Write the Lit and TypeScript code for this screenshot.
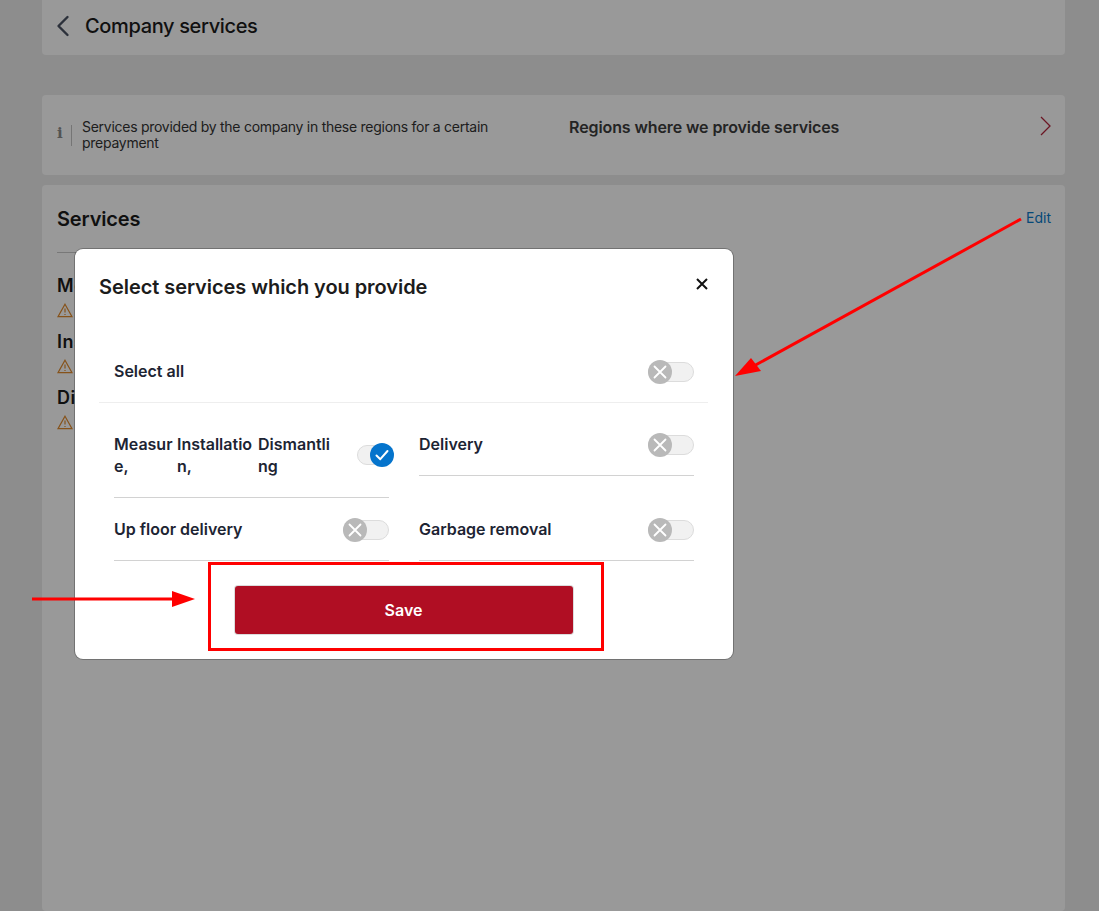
import { LitElement, html, css, svg } from "lit";
import { customElement, property } from "lit/decorators.js";

@customElement("app-switch")
export class AppSwitch extends LitElement {
  @property({ type: Boolean, reflect: true }) checked = false;

  static override styles = css`
    :host {
      display: block;
      position: relative;
      width: 46px;
      height: 24px;
      flex-shrink: 0;
    }
    :host([checked]) {
      width: 37px;
    }
    .track {
      position: absolute;
      left: 0;
      right: 0;
      top: 2px;
      height: 20px;
      box-sizing: border-box;
      background: #f1f1f1;
      border: 1px solid #dcdcdc;
      border-radius: 10px;
    }
    :host([checked]) .track {
      right: 2px;
    }
    .knob {
      position: absolute;
      left: 0;
      top: 0;
      width: 24px;
      height: 24px;
      border-radius: 50%;
      background: #b9b9b9;
      display: flex;
      align-items: center;
      justify-content: center;
    }
    :host([checked]) .knob {
      left: auto;
      right: 0;
      background: #0574cc;
    }
    svg {
      display: block;
      fill: none;
      stroke: #fff;
      stroke-width: 1.8;
      stroke-linecap: round;
      stroke-linejoin: round;
    }
    .tick {
      stroke-width: 2;
    }
  `;

  override render() {
    return html`
      <div class="track"></div>
      <div class="knob">
        ${this.checked
          ? html`<svg class="tick" width="16" height="16" viewBox="0 0 16 16"><path d="M2.5 8.5 6.3 12.2 13.5 4" /></svg>`
          : html`<svg width="14" height="14" viewBox="0 0 14 14"><path d="M1.5 1.5 12.5 12.5M12.5 1.5 1.5 12.5" /></svg>`}
      </div>
    `;
  }
}

const warning = html`<svg class="warn" width="16" height="15" viewBox="0 0 16 15" aria-hidden="true">
  <path d="M8 1.2 15 13.6H1L8 1.2Z" />
  <path d="M8 5.6V9.6M8 11V12" />
</svg>`;

@customElement("app-root")
export class AppRoot extends LitElement {
  static override styles = css`
    :host {
      display: block;
      height: 911px;
      overflow: hidden;
      position: relative;
      font-family: Inter, "Liberation Sans", sans-serif;
      color: #1b1b1b;
    }
    .page {
      height: 100%;
      box-sizing: border-box;
      background: #ececec;
      padding: 0 34px 0 42px;
      display: flex;
      flex-direction: column;
    }
    .card {
      background: #fff;
      border-radius: 4px;
    }
    .top {
      height: 55px;
      flex-shrink: 0;
      box-sizing: border-box;
      display: flex;
      align-items: center;
      gap: 15px;
      padding: 0 14px 3px 14px;
      margin-bottom: 40px;
      border-radius: 0 0 4px 4px;
      font-size: 20px;
      font-weight: 500;
      letter-spacing: -0.35px;
    }
    .top svg {
      fill: none;
      stroke: #4a5363;
      stroke-width: 2.4;
      stroke-linecap: round;
      stroke-linejoin: round;
    }
    .regions {
      height: 80px;
      flex-shrink: 0;
      box-sizing: border-box;
      margin-bottom: 10px;
      padding: 0 14px 0 15px;
      display: flex;
      align-items: flex-start;
    }
    .info-mark {
      margin-top: 30px;
      width: 15px;
      height: 21px;
      box-sizing: border-box;
      border-right: 1px solid #c4c4c4;
      font: bold 15px "DejaVu Serif", serif;
      color: #8a8a8a;
      line-height: 17px;
      flex-shrink: 0;
    }
    .note {
      margin: 24px 0 0 10px;
      width: 440px;
      font-size: 14px;
      line-height: 16px;
      letter-spacing: -0.27px;
      color: #333;
    }
    .regions-title {
      margin: 22px 0 0 47px;
      font-size: 16px;
      line-height: 20px;
      font-weight: 600;
      color: #3c3c3c;
      flex: 1;
      letter-spacing: -0.1px;
    }
    .chevron {
      margin-top: 21px;
      fill: none;
      stroke: #b3263d;
      stroke-width: 1.3;
    }
    .services {
      flex: 1;
      padding: 0 14px 0 15px;
    }
    .services-head {
      display: flex;
      justify-content: space-between;
      align-items: center;
      height: 67px;
      padding-top: 1px;
      box-sizing: border-box;
    }
    .services-head h2 {
      margin: 0;
      font-size: 20px;
      font-weight: 600;
      letter-spacing: -0.15px;
    }
    .edit {
      font-size: 14px;
      color: #0b7ac9;
      margin-top: -4px;
    }
    .service-list {
      width: 500px;
      border-top: 1px solid #c9c9c9;
      padding-top: 22px;
    }
    .service {
      height: 56px;
    }
    .service b {
      display: block;
      font-size: 18px;
      line-height: 22px;
      font-weight: 600;
      letter-spacing: 0.6px;
    }
    .warn {
      display: block;
      margin-top: 6px;
      fill: none;
      stroke: #e08a2d;
      stroke-width: 1.2;
    }
    .scrim {
      position: absolute;
      inset: 0;
      background: rgba(0, 0, 0, 0.4);
    }
    .modal {
      position: absolute;
      left: 75px;
      top: 249px;
      width: 658px;
      height: 410px;
      box-sizing: border-box;
      padding: 24px 25px 25px 24px;
      background: #fff;
      border-radius: 8px;
      box-shadow: 0 0 0 1px rgba(0, 0, 0, 0.25);
      display: flex;
      flex-direction: column;
    }
    .modal-head {
      display: flex;
      justify-content: space-between;
      align-items: flex-start;
      margin-bottom: 59px;
    }
    .modal-head h3 {
      margin: 0;
      font-size: 20px;
      line-height: 28px;
      font-weight: 600;
      letter-spacing: -0.06px;
      color: #1c1c1c;
    }
    .close {
      margin-top: 5px;
      fill: none;
      stroke: #111;
      stroke-width: 2;
    }
    .label {
      font-size: 16px;
      line-height: 22px;
      font-weight: 600;
      color: #1d2433;
    }
    app-switch {
      margin-bottom: -2px;
    }
    .select-all {
      display: flex;
      justify-content: space-between;
      align-items: flex-start;
      height: 43px;
      box-sizing: border-box;
      padding: 0 14px 18px 15px;
      border-bottom: 1px solid #eee;
      margin-bottom: 30px;
    }
    .grid {
      display: grid;
      grid-template-columns: 275px 275px;
      column-gap: 30px;
      row-gap: 20px;
      padding: 0 14px 0 15px;
      align-items: start;
    }
    .cell {
      display: flex;
      justify-content: space-between;
      align-items: flex-start;
      padding-bottom: 20px;
      border-bottom: 1px solid #d2d2d2;
    }
    .combined {
      justify-content: flex-start;
      align-items: center;
    }
    .combined .label:nth-child(1) {
      width: 63px;
    }
    .combined .label:nth-child(2) {
      width: 81px;
    }
    .combined .label:nth-child(3) {
      width: 99px;
    }
    .combined app-switch {
      margin: -2px -5px -2px 0;
    }
    .save {
      margin: 25px auto 0;
      width: 338px;
      height: 48px;
      flex-shrink: 0;
      border: 0;
      border-radius: 3px;
      box-shadow: 0 0 0 1px #dcdcdc;
      background: #b00e23;
      color: #fff;
      font: 600 16px Inter, "Liberation Sans", sans-serif;
    }
    .marks {
      position: absolute;
      inset: 0;
      pointer-events: none;
    }
  `;

  override render() {
    return html`
      <div class="page">
        <div class="card top">
          <svg width="14" height="22" viewBox="0 0 14 22" aria-hidden="true"><path d="M11.5 2 2.5 11 11.5 20" /></svg>
          <span>Company services</span>
        </div>

        <div class="card regions">
          <div class="info-mark">i</div>
          <div class="note">Services provided by the company in these regions for a certain prepayment</div>
          <div class="regions-title">Regions where we provide services</div>
          <svg class="chevron" width="11" height="20" viewBox="0 0 11 20" aria-hidden="true"><path d="M1 1 10 10 1 19" /></svg>
        </div>

        <div class="card services">
          <div class="services-head">
            <h2>Services</h2>
            <span class="edit">Edit</span>
          </div>
          <div class="service-list">
            <div class="service"><b>Measure</b>${warning}</div>
            <div class="service"><b>Installation</b>${warning}</div>
            <div class="service"><b>Dismantling</b>${warning}</div>
          </div>
        </div>
      </div>

      <div class="scrim">
        <div class="modal">
          <div class="modal-head">
            <h3>Select services which you provide</h3>
            <svg class="close" width="12" height="12" viewBox="0 0 12 12" aria-hidden="true"><path d="M1 1 11 11M11 1 1 11" /></svg>
          </div>

          <div class="select-all">
            <span class="label">Select all</span>
            <app-switch></app-switch>
          </div>

          <div class="grid">
            <div class="cell combined">
              <span class="label">Measur<br />e,</span>
              <span class="label">Installatio<br />n,</span>
              <span class="label">Dismantli<br />ng</span>
              <app-switch checked></app-switch>
            </div>
            <div class="cell">
              <span class="label">Delivery</span>
              <app-switch></app-switch>
            </div>
            <div class="cell">
              <span class="label">Up floor delivery</span>
              <app-switch></app-switch>
            </div>
            <div class="cell">
              <span class="label">Garbage removal</span>
              <app-switch></app-switch>
            </div>
          </div>

          <button class="save">Save</button>
        </div>
      </div>

      <!-- red annotations drawn on top of the screenshot -->
      <svg class="marks" width="1099" height="911" viewBox="0 0 1099 911" aria-hidden="true">
        ${svg`
          <path d="M1021 219 752 367" stroke="#f00" stroke-width="3" fill="none" />
          <path d="M735 376 751 358 761 371Z" fill="#f00" />
          <path d="M32 599H176" stroke="#f00" stroke-width="3" fill="none" />
          <path d="M195 599 172 591V607Z" fill="#f00" />
          <rect x="209.5" y="563.5" width="393" height="86" fill="none" stroke="#f00" stroke-width="3" />
        `}
      </svg>
    `;
  }
}

declare global {
  interface HTMLElementTagNameMap {
    "app-root": AppRoot;
    "app-switch": AppSwitch;
  }
}
